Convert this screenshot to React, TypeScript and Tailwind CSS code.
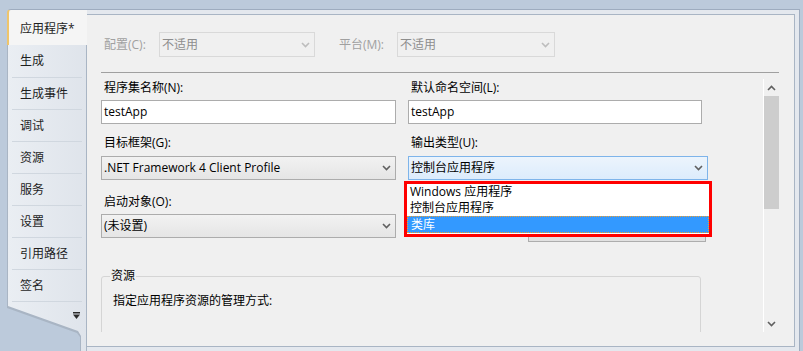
import React from 'react'

// Types
type SelectProps = {
  value: string
  width: string
  height?: string
  variant: 'disabled' | 'normal' | 'focus'
}

type FieldProps = {
  label: string
  width: string
  children: React.ReactNode
}

const tabs = ['生成', '生成事件', '调试', '资源', '服务', '设置', '引用路径', '签名']

// Small chevron drawing
function Chevron({ up = false, color }: { up?: boolean; color: string }) {
  return (
    <svg width="9" height="6" viewBox="0 0 9 6">
      <polyline
        points={up ? '1,5 4.5,1.5 8,5' : '1,1 4.5,4.5 8,1'}
        fill="none"
        stroke={color}
        strokeWidth="1.6"
      />
    </svg>
  )
}

function Select({ value, width, height = 'h-[24px]', variant }: SelectProps) {
  const look =
    variant === 'disabled'
      ? 'border-[#d9d9d9] bg-[#f0f0f0] text-[#8d8d8d]'
      : variant === 'focus'
        ? 'border-[#7eb4ea] bg-gradient-to-b from-[#ecf4fc] to-[#dcecfc] text-black'
        : 'border-[#acacac] bg-gradient-to-b from-[#f2f2f2] to-[#e5e5e5] text-black'
  return (
    <div
      className={`${width} ${height} ${look} border flex items-center justify-between pl-[2px] pr-[4px]`}
    >
      <span>{value}</span>
      <Chevron color={variant === 'disabled' ? '#bdbdbd' : '#606060'} />
    </div>
  )
}

function TextBox({ value, width }: { value: string; width: string }) {
  return (
    <div
      className={`${width} h-[24px] border border-[#acacac] bg-white flex items-center pl-[2px] text-black`}
    >
      {value}
    </div>
  )
}

function Field({ label, width, children }: FieldProps) {
  return (
    <div className={width}>
      <div className="h-[16px] leading-[16px] pl-[3px] text-black">{label}</div>
      {children}
    </div>
  )
}

export default function App() {
  return (
    <div className="w-[803px] h-[351px] overflow-hidden flex bg-[#bccadb] text-[12px] text-[#1e1e1e] font-['Open_Sans','Noto_Sans_CJK_SC',sans-serif]">
      {/* Tabs */}
      <div className="ml-[7px] mt-[9px] w-[80px] flex flex-col">
        <div className="h-[36px] bg-[#f5f5f5] border-t border-t-[#9eacbf] border-l-2 border-l-[#efc56b] rounded-tl-[4px] pl-[11px] pt-[3px] flex items-center">
          应用程序*
        </div>
        <div className="h-[257px] border-l border-r border-[#a9b5c4] bg-gradient-to-r from-[#eaeef3] to-[#dfe4eb] flex flex-col">
          {tabs.map((t, i) => (
            <div
              key={t}
              className={`${i === 0 ? 'h-[33px]' : 'h-[32px]'} mx-[4px] pl-[8px] border-b border-[#d0d7df] flex items-center`}
            >
              {t}
            </div>
          ))}
        </div>
        <div className="relative h-[49px] bg-[#a9b5c4] [clip-path:polygon(0_0,80px_0,80px_49px,73px_49px,73px_35px,70px_31px,0_6px)]">
          <div className="absolute inset-0 bg-gradient-to-r from-[#eaeef3] to-[#dfe4eb] [clip-path:polygon(1px_0,79px_0,79px_49px,74px_49px,74px_34px,71px_29px,1px_4px)]" />
          <svg
            className="absolute left-[66px] top-[10px]"
            width="7"
            height="7"
            viewBox="0 0 7 7"
          >
            <rect x="0" y="0" width="7" height="1.5" fill="#2a2a2a" />
            <polygon points="0,2.5 7,2.5 3.5,7" fill="#2a2a2a" />
          </svg>
        </div>
      </div>

      {/* Frame */}
      <div className="mt-[9px] w-[713px] h-[342px] border-t border-r border-[#9eacbf] bg-[#e4e8ee] pt-[4px] pr-[4px]">
        <div className="relative h-[333px] bg-[#f0f0f0] border-t border-r border-b border-[#a9b5c4]">
          {/* Configuration row */}
          <div className="flex items-center ml-[17px] mt-[17px] h-[25px] text-[#a0a0a0]">
            <span className="w-[55px]">配置(C):</span>
            <Select value="不适用" width="w-[156px]" height="h-[25px]" variant="disabled" />
            <span className="ml-[24px] w-[58px]">平台(M):</span>
            <Select value="不适用" width="w-[158px]" height="h-[25px]" variant="disabled" />
          </div>
          <div className="mt-[15px] ml-[14px] w-[678px] h-px bg-[#a0a0a0]" />

          {/* Scrollable content */}
          <div className="mt-[6px] ml-[1px] w-[691px] h-[253px] flex">
            <div className="flex-1 overflow-hidden pl-[13px]">
              <div className="flex gap-[12px] mt-[1px]">
                <Field label="程序集名称(N):" width="w-[295px]">
                  <div className="mt-[4px]">
                    <TextBox value="testApp" width="w-[295px]" />
                  </div>
                </Field>
                <Field label="默认命名空间(L):" width="w-[300px]">
                  <div className="mt-[4px]">
                    <TextBox value="testApp" width="w-[294px]" />
                  </div>
                </Field>
              </div>
              <div className="flex gap-[12px] mt-[11px]">
                <Field label="目标框架(G):" width="w-[295px]">
                  <div className="mt-[5px]">
                    <Select value=".NET Framework 4 Client Profile" width="w-[295px]" variant="normal" />
                  </div>
                </Field>
                <Field label="输出类型(U):" width="w-[300px]">
                  <div className="mt-[5px]">
                    <Select value="控制台应用程序" width="w-[300px]" variant="focus" />
                  </div>
                </Field>
              </div>
              <div className="flex gap-[12px] mt-[14px]">
                <Field label="启动对象(O):" width="w-[295px]">
                  <div className="mt-[4px]">
                    <Select value="(未设置)" width="w-[295px]" variant="normal" />
                  </div>
                </Field>
                <div className="w-[300px] pt-[25px] pl-[120px]">
                  <div className="w-[178px] h-[23px] border border-[#adadad] bg-[#e1e1e1] flex items-center justify-center text-black">
                    程序集信息...
                  </div>
                </div>
              </div>

              {/* Resources group */}
              <fieldset className="mt-[26px] w-[600px] h-[90px] border border-[#d5d5d5] rounded-[3px] px-[8px]">
                <legend className="px-[1px] leading-[16px] text-black">资源</legend>
                <div className="mt-[9px] pl-[3px] leading-[16px] text-black">
                  指定应用程序资源的管理方式:
                </div>
                <div className="mt-[25px] ml-[8px] w-[13px] h-[13px] rounded-full border border-[#7a7a7a] bg-white" />
              </fieldset>
            </div>

            {/* Scrollbar */}
            <div className="w-[16px] border-l border-white flex flex-col">
              <div className="h-[17px] flex items-center justify-center">
                <Chevron up color="#606060" />
              </div>
              <div className="h-[113px] bg-[#cdcdcd]" />
              <div className="flex-1" />
              <div className="h-[17px] flex items-center justify-center">
                <Chevron color="#606060" />
              </div>
            </div>
          </div>

          {/* Output type drop-down list */}
          <div className="absolute left-[317px] top-[166px] w-[308px] h-[56px] border-[3px] border-[#ff0000] bg-white text-black">
            <div className="h-[16px] leading-[16px] pl-[3px]">Windows 应用程序</div>
            <div className="h-[16px] leading-[16px] pl-[3px]">控制台应用程序</div>
            <div className="h-[17px] leading-[15px] pl-[3px] bg-[#3399ff] text-white border border-dotted border-[#f0a030]">
              类库
            </div>
          </div>
        </div>
      </div>
    </div>
  )
}
